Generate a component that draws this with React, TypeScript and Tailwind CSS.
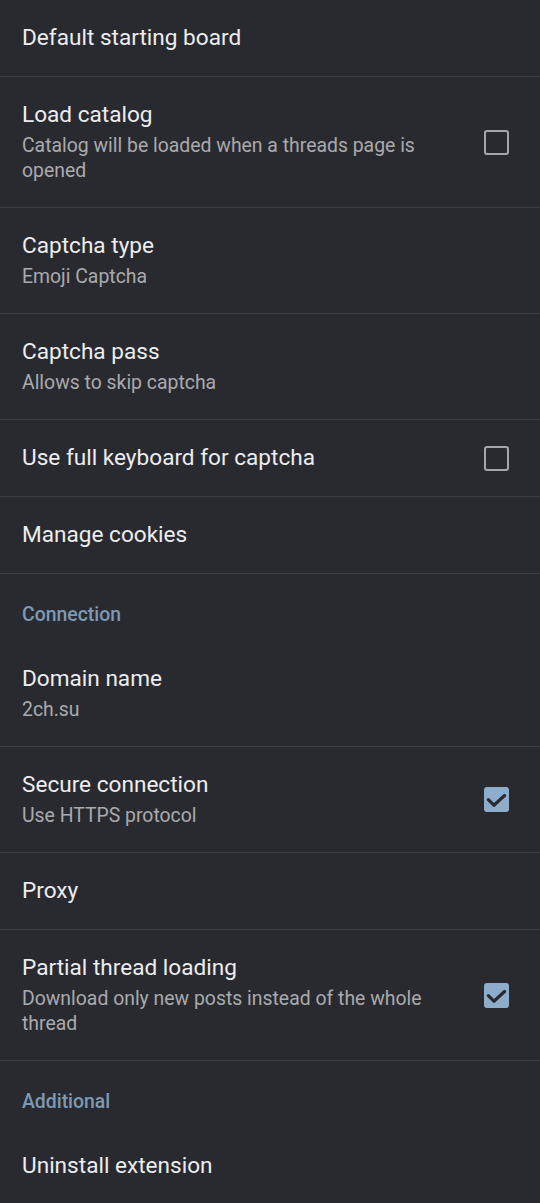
import React from "react";

type Item =
  | { kind: "row"; title: string; sub?: string; check?: "on" | "off" }
  | { kind: "header"; title: string };

const items: Item[] = [
  { kind: "row", title: "Default starting board" },
  { kind: "row", title: "Load catalog", sub: "Catalog will be loaded when a threads page is opened", check: "off" },
  { kind: "row", title: "Captcha type", sub: "Emoji Captcha" },
  { kind: "row", title: "Captcha pass", sub: "Allows to skip captcha" },
  { kind: "row", title: "Use full keyboard for captcha", check: "off" },
  { kind: "row", title: "Manage cookies" },
  { kind: "header", title: "Connection" },
  { kind: "row", title: "Domain name", sub: "2ch.su" },
  { kind: "row", title: "Secure connection", sub: "Use HTTPS protocol", check: "on" },
  { kind: "row", title: "Proxy" },
  { kind: "row", title: "Partial thread loading", sub: "Download only new posts instead of the whole thread", check: "on" },
  { kind: "header", title: "Additional" },
  { kind: "row", title: "Uninstall extension" },
];

function Check({ on }: { on: boolean }) {
  if (on) {
    return (
      <div className="w-[25px] h-[25px] rounded-[3px] bg-[#8eadcb]">
        <svg width="25" height="25" viewBox="0 0 25 25" fill="none">
          <path d="M4.3 12.6L9.9 18.2L20.6 8.5" stroke="#2a2b30" strokeWidth="3.2" strokeLinecap="round" strokeLinejoin="round" />
        </svg>
      </div>
    );
  }
  return <div className="w-[25px] h-[25px] rounded-[3px] border-[2.5px] border-[#a6a7aa]" />;
}

export default function App() {
  return (
    <div
      className="w-[540px] h-[1203px] bg-[#292a2f] overflow-hidden"
      style={{ fontFamily: "Roboto, 'Noto Sans', sans-serif" }}
    >
      {items.map((it, i) => {
        if (it.kind === "header") {
          return (
            <div key={i} className="pl-[22px] pt-[31px] pb-[16px] text-[19.4px] leading-[20px] font-medium text-[#7c9ab6]">
              {it.title}
            </div>
          );
        }
        const last = i === items.length - 1;
        return (
          <div
            key={i}
            className={"flex items-center pl-[22px] pr-[31px] " + (last ? "" : "border-b border-[#3d3e43]")}
          >
            <div className="flex-1 py-[24px] min-w-0">
              <div className="text-[22.6px] leading-[28px] text-[#ecedef]">{it.title}</div>
              {it.sub && (
                <div className="mt-[4px] text-[19.4px] leading-[25px] text-[#a9aaae] pr-[24px]">{it.sub}</div>
              )}
            </div>
            {it.check && <Check on={it.check === "on"} />}
          </div>
        );
      })}
    </div>
  );
}
